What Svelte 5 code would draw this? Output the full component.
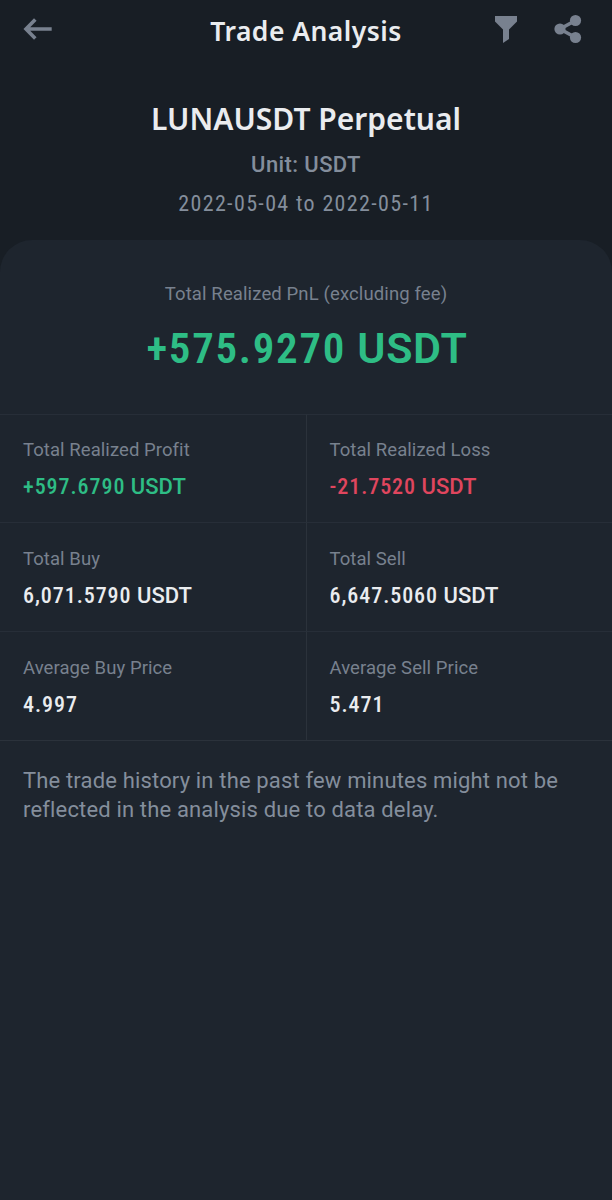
<script>
  const stats = [
    { label: 'Total Realized Profit', value: '+597.6790', unit: 'USDT', tone: 'gain' },
    { label: 'Total Realized Loss', value: '-21.7520', unit: 'USDT', tone: 'loss' },
    { label: 'Total Buy', value: '6,071.5790', unit: 'USDT', tone: '' },
    { label: 'Total Sell', value: '6,647.5060', unit: 'USDT', tone: '' },
    { label: 'Average Buy Price', value: '4.997', unit: '', tone: '' },
    { label: 'Average Sell Price', value: '5.471', unit: '', tone: '' },
  ];
</script>

<div class="screen">
  <header class="bar">
    <button class="icon" aria-label="Back">
      <svg width="30" height="24" viewBox="0 0 30 24" fill="none" stroke="currentColor" stroke-width="3.6">
        <path d="M3.5 12H28.7M12.3 2.6L3 12L12.3 21.4" />
      </svg>
    </button>
    <h1>Trade Analysis</h1>
    <div class="actions">
      <button class="icon" aria-label="Filter">
        <svg width="24" height="28" viewBox="0 0 24 28" fill="currentColor">
          <path d="M1 1H23V6.5L15 14.5V24L9 28V14.5L1 6.5Z" />
        </svg>
      </button>
      <button class="icon" aria-label="Share">
        <svg width="28" height="30" viewBox="0 0 28 30" fill="currentColor">
          <path d="M21.5 6.5L6 15L21.5 23.5" fill="none" stroke="currentColor" stroke-width="3.6" />
          <circle cx="21.5" cy="6.5" r="5.6" />
          <circle cx="6" cy="15" r="5.6" />
          <circle cx="21.5" cy="23.5" r="5.6" />
        </svg>
      </button>
    </div>
  </header>

  <section class="intro">
    <h2>LUNAUSDT Perpetual</h2>
    <p class="unit">Unit: USDT</p>
    <p class="dates">2022-05-04 to 2022-05-11</p>
  </section>

  <main class="sheet">
    <div class="total">
      <p class="caption">Total Realized PnL (excluding fee)</p>
      <p class="amount"><span class="digits">+575.9270</span> USDT</p>
    </div>
    <div class="grid">
      {#each stats as stat}
        <div class="cell">
          <span class="label">{stat.label}</span>
          <span class="value {stat.tone}"><span class="digits">{stat.value}</span> {stat.unit}</span>
        </div>
      {/each}
    </div>
    <p class="note">The trade history in the past few minutes might not be<br />reflected in the analysis due to data delay.</p>
  </main>
</div>

<style>
  :global(body) {
    background: #181e25;
  }
  .screen {
    display: flex;
    flex-direction: column;
    width: 612px;
    height: 1200px;
    overflow: hidden;
    background: #181e25;
    color: #eaecef;
    font-family: Roboto, sans-serif;
    white-space: nowrap;
  }
  h1, h2, p {
    margin: 0;
  }
  .bar {
    display: grid;
    grid-template-columns: 120px 1fr 120px;
    align-items: center;
    height: 60px;
    box-sizing: border-box;
    padding: 0 30px 2px 23px;
  }
  .icon {
    display: flex;
    padding: 0;
    border: 0;
    background: none;
    color: #78818f;
  }
  .actions {
    display: flex;
    justify-content: flex-end;
    align-items: center;
    gap: 36px;
  }
  h1 {
    padding: 4px 0 0 7px;
    font: 600 26.5px/36px "Noto Sans", sans-serif;
    letter-spacing: 0.45px;
    text-align: center;
  }
  .intro {
    display: flex;
    flex-direction: column;
    align-items: center;
    height: 180px;
    box-sizing: border-box;
    padding-top: 39px;
  }
  h2 {
    font: 600 30px/40px "Noto Sans", sans-serif;
  }
  .unit {
    margin-top: 11px;
    font-size: 22px;
    line-height: 30px;
    font-weight: 500;
    letter-spacing: 0.4px;
    color: #848e9c;
  }
  .dates {
    margin-top: 10px;
    font-size: 22px;
    font-stretch: 85%;
    line-height: 28px;
    letter-spacing: 1.35px;
    color: #848e9c;
  }
  .sheet {
    flex: 1;
    border-radius: 32px 32px 0 0;
    background: #1e252e;
  }
  .total {
    display: flex;
    flex-direction: column;
    align-items: center;
    height: 174px;
    box-sizing: border-box;
    padding-top: 41px;
  }
  .caption, .label {
    font-size: 18.5px;
    line-height: 26px;
    letter-spacing: 0.12px;
    color: #78818e;
  }
  .label {
    letter-spacing: 0.07px;
  }
  .amount {
    margin-top: 15px;
    padding-left: 2px;
    font-size: 43px;
    line-height: 52px;
    font-weight: 600;
    letter-spacing: 0.6px;
    color: #2ebd85;
  }
  .amount .digits {
    font-stretch: 85%;
    letter-spacing: 1.7px;
  }
  .grid {
    display: grid;
    grid-template-columns: 307px 305px;
    grid-template-rows: 108px 109px 109px;
    border-bottom: 1px solid #2b323b;
  }
  .cell {
    display: flex;
    flex-direction: column;
    padding: 23px 22.5px 0;
    border-top: 1px solid #272e38;
  }
  .cell:nth-child(-n + 2) {
    padding-top: 22px;
  }
  .cell:nth-child(odd) {
    padding-left: 23px;
    border-right: 1px solid #2b323b;
  }
  .value {
    margin-top: 9px;
    font-size: 22px;
    line-height: 30px;
    font-weight: 500;
  }
  .value .digits {
    font-stretch: 85%;
    letter-spacing: 0.95px;
  }
  .gain {
    color: #2ebd85;
  }
  .loss {
    color: #e0465e;
  }
  .note {
    padding: 25px 23px;
    font-size: 22px;
    line-height: 29px;
    letter-spacing: 0.16px;
    color: #848e9c;
  }
</style>
